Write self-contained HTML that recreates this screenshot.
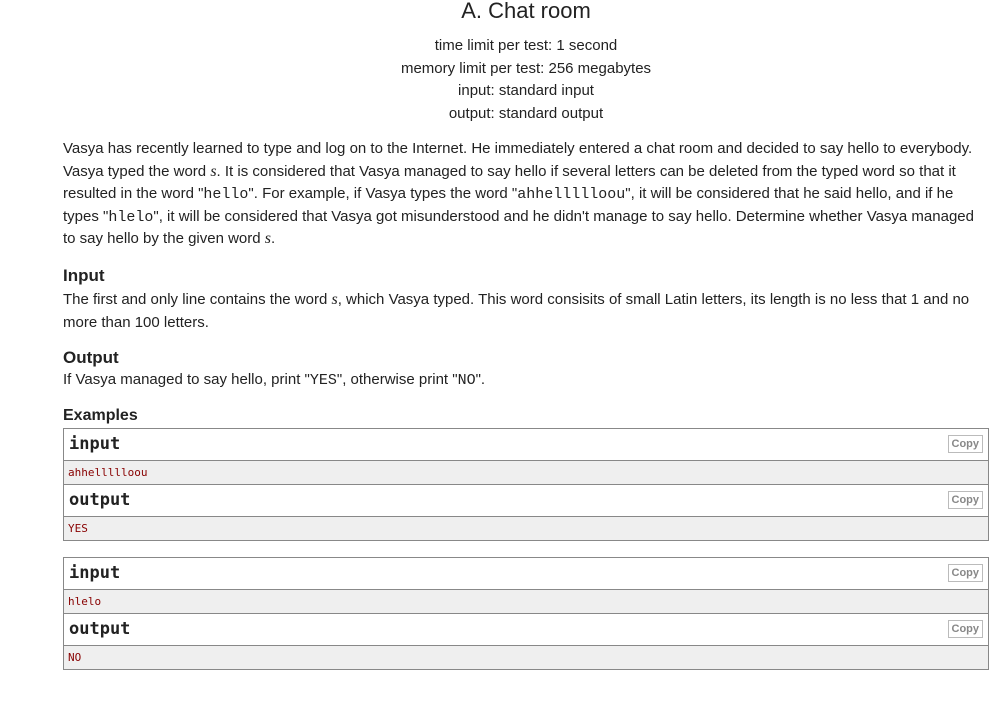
<!DOCTYPE html>
<html><head><style>
body{margin:0;width:1002px;height:706px;background:#fff;font-family:"Liberation Sans",Arial,sans-serif;color:#222;position:relative;overflow:hidden}
.a{position:absolute}
.c{left:63px;width:926px;text-align:center}
.hd{font-size:15px;line-height:22px}
.txt{left:63px;width:930px;font-size:15px;line-height:22.5px;white-space:nowrap}
.h{left:63px;font-size:17px;font-weight:bold}
tt{font-family:"Liberation Mono",monospace;font-size:15px;line-height:1}
i{font-family:"Liberation Serif",serif;font-size:16px;line-height:1}
.box{left:63px;width:924px;border:1px solid #888}
.t{height:31px;border-bottom:1px solid #888;position:relative;font-family:"DejaVu Sans Mono",monospace;font-weight:bold;font-size:17px;line-height:31px;padding-left:5px}
.d{height:23px;background:#efefef;border-bottom:1px solid #888;font-family:"DejaVu Sans Mono",monospace;font-size:11px;line-height:23px;padding-left:4px;color:#800}
.d.l{border-bottom:none}
.cp{position:absolute;right:5px;top:6px;border:1px solid #bbb;color:#888;font-family:"Liberation Sans",sans-serif;font-size:11px;font-weight:bold;line-height:16px;padding:0 3px}
</style></head><body>
<div class="a c" style="top:-2px;font-size:22px;line-height:26px">A. Chat room</div>
<div class="a c hd" style="top:35px">time limit per test: 1 second</div>
<div class="a c hd" style="top:58px">memory limit per test: 256 megabytes</div>
<div class="a c hd" style="top:80px">input: standard input</div>
<div class="a c hd" style="top:103px">output: standard output</div>
<div class="a txt" style="top:138px">Vasya has recently learned to type and log on to the Internet. He immediately entered a chat room and decided to say hello to everybody.<br>Vasya typed the word <i>s</i>. It is considered that Vasya managed to say hello if several letters can be deleted from the typed word so that it<br>resulted in the word "<tt>hello</tt>". For example, if Vasya types the word "<tt>ahhellllloou</tt>", it will be considered that he said hello, and if he<br>types "<tt>hlelo</tt>", it will be considered that Vasya got misunderstood and he didn't manage to say hello. Determine whether Vasya managed<br>to say hello by the given word <i>s</i>.</div>
<div class="a h" style="top:266px">Input</div>
<div class="a txt" style="top:289px">The first and only line contains the word <i>s</i>, which Vasya typed. This word consisits of small Latin letters, its length is no less that 1 and no<br>more than 100 letters.</div>
<div class="a h" style="top:348px">Output</div>
<div class="a txt" style="top:369px">If Vasya managed to say hello, print "<tt>YES</tt>", otherwise print "<tt>NO</tt>".</div>
<div class="a h" style="top:407px;font-size:16px">Examples</div>
<div class="a box" style="top:428px">
<div class="t">input<span class="cp">Copy</span></div>
<div class="d">ahhellllloou</div>
<div class="t">output<span class="cp">Copy</span></div>
<div class="d l">YES</div>
</div>
<div class="a box" style="top:557px">
<div class="t">input<span class="cp">Copy</span></div>
<div class="d">hlelo</div>
<div class="t">output<span class="cp">Copy</span></div>
<div class="d l">NO</div>
</div>
</body></html>
